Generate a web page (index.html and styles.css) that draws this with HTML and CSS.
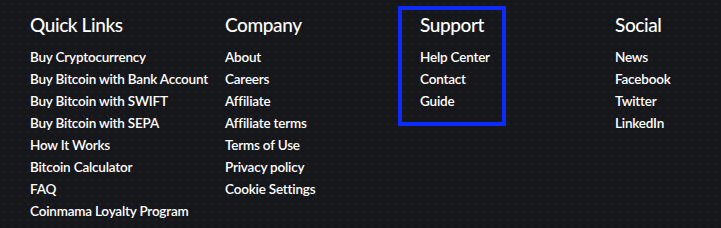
FILE: index.html
```html
<!DOCTYPE html>
<html lang="en">
<head>
<meta charset="utf-8">
<title>Footer links</title>
<link rel="stylesheet" href="styles.css">
</head>
<body>
<footer class="footer">
  <section class="col">
    <h3 class="col-title">Quick Links</h3>
    <ul class="links">
      <li><a href="#">Buy Cryptocurrency</a></li>
      <li><a href="#">Buy Bitcoin with Bank Account</a></li>
      <li><a href="#">Buy Bitcoin with SWIFT</a></li>
      <li><a href="#">Buy Bitcoin with SEPA</a></li>
      <li><a href="#">How It Works</a></li>
      <li><a href="#">Bitcoin Calculator</a></li>
      <li><a href="#">FAQ</a></li>
      <li><a href="#">Coinmama Loyalty Program</a></li>
    </ul>
  </section>
  <section class="col">
    <h3 class="col-title">Company</h3>
    <ul class="links">
      <li><a href="#">About</a></li>
      <li><a href="#">Careers</a></li>
      <li><a href="#">Affiliate</a></li>
      <li><a href="#">Affiliate terms</a></li>
      <li><a href="#">Terms of Use</a></li>
      <li><a href="#">Privacy policy</a></li>
      <li><a href="#">Cookie Settings</a></li>
    </ul>
  </section>
  <section class="col col-highlight">
    <h3 class="col-title">Support</h3>
    <ul class="links">
      <li><a href="#">Help Center</a></li>
      <li><a href="#">Contact</a></li>
      <li><a href="#">Guide</a></li>
    </ul>
  </section>
  <section class="col">
    <h3 class="col-title">Social</h3>
    <ul class="links">
      <li><a href="#">News</a></li>
      <li><a href="#">Facebook</a></li>
      <li><a href="#">Twitter</a></li>
      <li><a href="#">LinkedIn</a></li>
    </ul>
  </section>
</footer>
</body>
</html>
```
FILE: styles.css
```css
html, body {
  margin: 0;
  padding: 0;
}
body {
  width: 721px;
  height: 228px;
  overflow: hidden;
  background-color: #16171b;
  background-image: radial-gradient(circle, rgba(110, 45, 55, 0.25) 0.6px, transparent 1px);
  background-size: 8px 8px;
  font-family: "Lato", "Open Sans", sans-serif;
  color: #ffffff;
}
.footer {
  display: grid;
  grid-template-columns: 195px 195px 195px 1fr;
  padding: 13px 0 0 30px;
}
.col {
  position: relative;
}
.col-title {
  margin: 0 0 9px;
  font-size: 19px;
  font-weight: 500;
  line-height: 24px;
  letter-spacing: -0.4px;
}
.links {
  list-style: none;
  margin: 0;
  padding: 0;
}
.links li {
  height: 22px;
  line-height: 22px;
  font-size: 13.5px;
  font-weight: 600;
  letter-spacing: -0.2px;
}
.links a {
  color: #ffffff;
  text-decoration: none;
}
.col-highlight::after {
  content: "";
  position: absolute;
  left: -22px;
  top: -7px;
  width: 100px;
  height: 112px;
  border: 4px solid #0b2bff;
}
```
